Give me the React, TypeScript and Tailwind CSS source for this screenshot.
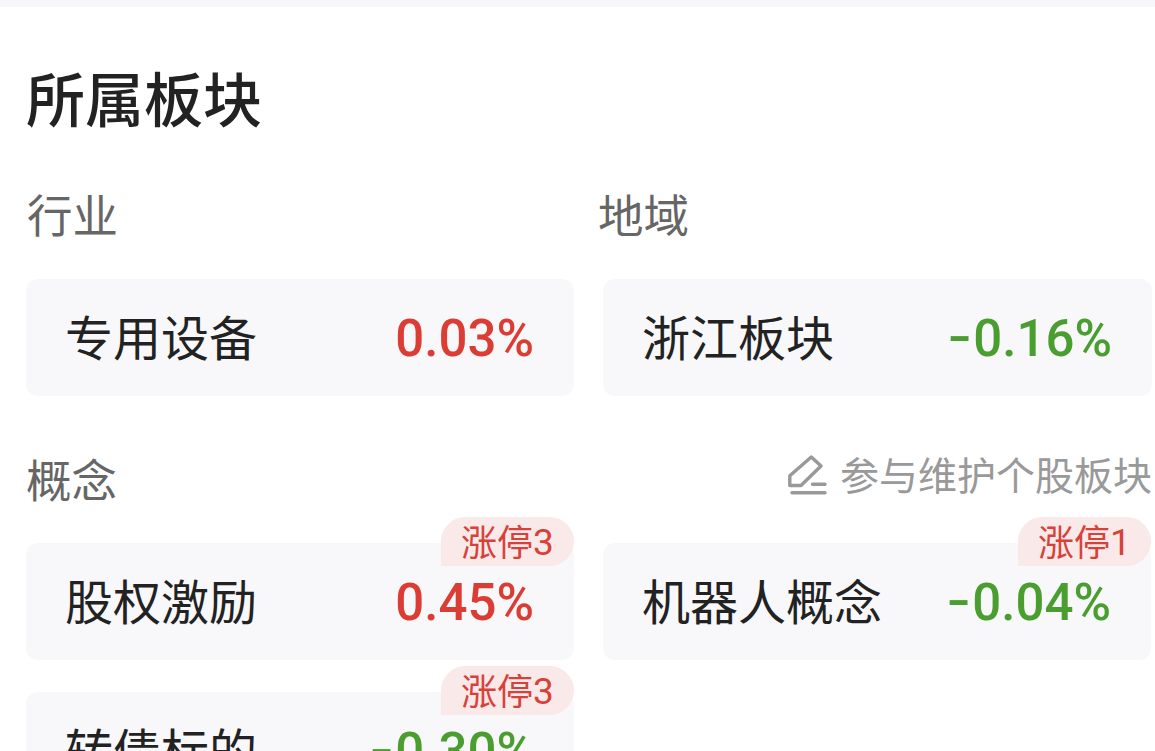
import clsx from 'clsx';

interface Sector {
  name: string;
  change: number;
  limitUps?: number;
}

const INDUSTRY: Sector = { name: '专用设备', change: 0.03 };
const REGION: Sector = { name: '浙江板块', change: -0.16 };
const CONCEPTS: Sector[] = [
  { name: '股权激励', change: 0.45, limitUps: 3 },
  { name: '机器人概念', change: -0.04, limitUps: 1 },
  { name: '转债标的', change: -0.3, limitUps: 3 },
];

function ChangeValue({ value }: { value: number }) {
  const negative = value < 0;
  return (
    <span
      className={clsx(
        "pt-px font-['Roboto','Noto_Sans_CJK_SC',sans-serif] text-[51px] leading-none font-medium",
        negative ? 'text-[#4a9e2f]' : 'text-[#db3d34]',
      )}
    >
      {/* Roboto's hyphen is short and low next to figures, so it is widened and raised */}
      {negative && (
        <span className="mr-0.5 inline-block origin-right -translate-y-0.5 scale-x-[1.35]">-</span>
      )}
      {Math.abs(value).toFixed(2)}%
    </span>
  );
}

function SectorCard({ sector }: { sector: Sector }) {
  return (
    <div className="relative flex h-[117px] items-center justify-between rounded-xl bg-[#f8f8fb] pr-10 pl-[39px]">
      <span className="pb-1.5 text-[48px] leading-none text-[#222222]">{sector.name}</span>
      <ChangeValue value={sector.change} />
      {sector.limitUps ? (
        <span className="absolute -top-[26px] right-0 flex h-[49px] w-[133px] items-center rounded-t-[25px] rounded-br-[25px] bg-[#fae9e9] pl-5 text-[36px] leading-none text-[#d8413a]">
          <span className="pb-1">涨停</span>
          <span className="pt-0.5 font-['Roboto',sans-serif] text-[37px]">{sector.limitUps}</span>
        </span>
      ) : null}
    </div>
  );
}

function EditIcon() {
  return (
    <svg
      className="mt-0.5 h-10 w-10"
      viewBox="0 0 40 40"
      fill="none"
      stroke="currentColor"
      strokeWidth="3.4"
      strokeLinecap="round"
      strokeLinejoin="round"
    >
      <path d="M23.3 2 33 11 13 30.5H1.8V20.7Z" />
      <path d="M24.5 29.3H37M4 37.8H37" />
    </svg>
  );
}

export default function App() {
  return (
    <div className="h-[751px] overflow-hidden bg-white font-['Noto_Sans_CJK_SC',sans-serif]">
      <div className="h-[7px] bg-[#f7f7f9]" />
      <section className="w-[1151px] pt-[60px] pl-[26px]">
        <h2 className="text-[59px] leading-[60px] font-medium text-[#222222]">所属板块</h2>

        <div className="mt-[61px] grid grid-cols-2 gap-x-[29px] text-[45.5px] leading-[50px] text-[#666666]">
          <h3 className="pl-px">行业</h3>
          <h3 className="-ml-[5px]">地域</h3>
        </div>
        <div className="mt-[41px] grid grid-cols-[548px_549px] gap-x-[29px]">
          <SectorCard sector={INDUSTRY} />
          <SectorCard sector={REGION} />
        </div>

        <div className="mt-[57px] flex h-[50px] items-center justify-between">
          <h3 className="text-[45.5px] leading-[50px] text-[#666666]">概念</h3>
          <button
            type="button"
            className="-mt-2 -mr-px flex items-center gap-3 text-[39px] leading-none text-[#999999]"
          >
            <EditIcon />
            <span className="pb-0.5">参与维护个股板块</span>
          </button>
        </div>
        <div className="mt-10 grid grid-cols-2 gap-x-[29px] gap-y-8">
          {CONCEPTS.map((sector) => (
            <SectorCard key={sector.name} sector={sector} />
          ))}
        </div>
      </section>
    </div>
  );
}
